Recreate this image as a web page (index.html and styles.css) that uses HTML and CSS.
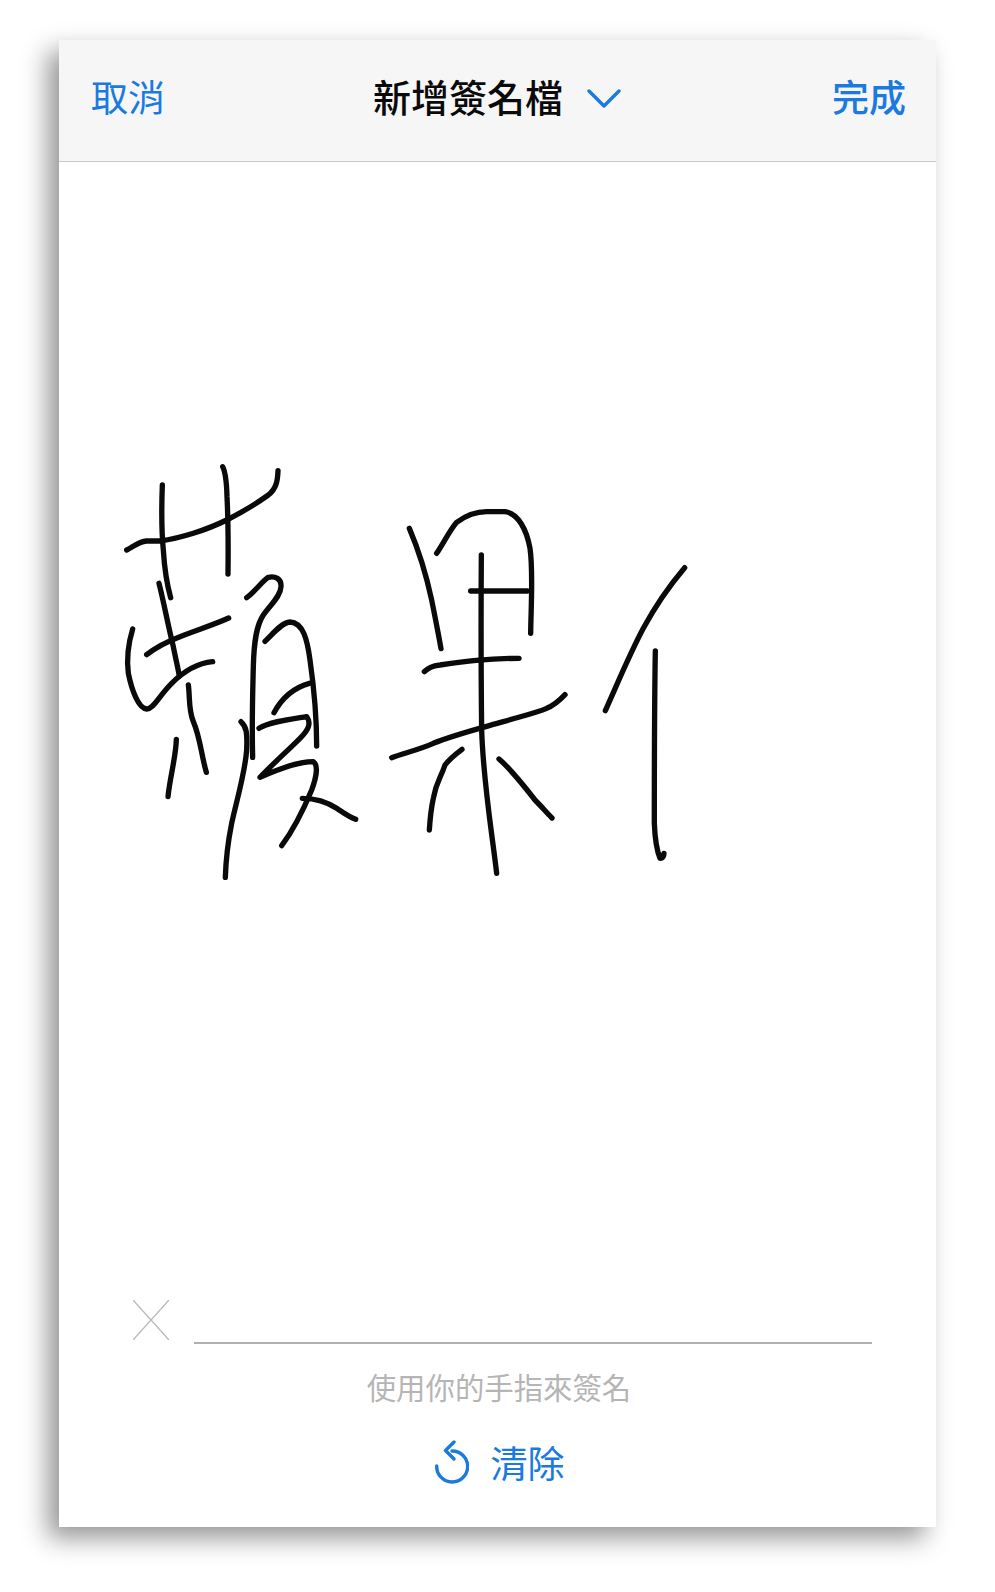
FILE: index.html
```html
<!DOCTYPE html>
<html lang="zh-Hant">
<head>
<meta charset="utf-8">
<title>新增簽名檔</title>
<link rel="stylesheet" href="styles.css">
</head>
<body>
<main class="sheet">
  <header class="bar">
    <span class="action action-left">取消</span>
    <div class="title">
      <span>新增簽名檔</span>
      <svg class="chevron" viewBox="0 0 34 20"><path d="M2 2 L17 17 L32 2"/></svg>
    </div>
    <span class="action action-right">完成</span>
  </header>
  <svg class="canvas" viewBox="0 0 877 1138" preserveAspectRatio="none">
    <g class="ink" transform="translate(41 278) scale(.33333)">
      <path d="M80 330 C100 320 115 305 140 303 L180 303 C240 295 320 270 380 240 C430 215 470 190 505 165 C530 145 533 120 534 92"/>
      <path d="M187 135 C185 190 183 260 190 330 C193 380 200 430 212 473"/>
      <path d="M368 80 C378 100 380 130 381 170 C385 250 385 320 384 402"/>
      <path d="M177 430 C190 480 205 560 220 620 C228 660 235 690 238 708"/>
      <path d="M140 644 C170 620 200 605 240 590 C290 570 340 555 386 534"/>
      <path d="M98 567 C85 610 80 660 85 700 C95 750 115 805 140 807 C160 808 175 770 215 730 C250 695 290 670 338 665"/>
      <path d="M265 735 C270 770 265 810 280 845 C300 890 305 950 319 997"/>
      <path d="M229 898 C228 950 210 1010 204 1070"/>
      <path d="M440 473 C465 455 485 425 505 412 C525 408 545 415 543 440 C542 470 510 495 490 525 C470 555 462 600 460 680 C458 760 455 850 458 952"/>
      <path d="M423 845 C440 860 442 880 440 930 C435 1000 410 1080 395 1150 C385 1200 378 1250 376 1312"/>
      <path d="M495 604 C520 580 545 548 570 546 C610 548 622 600 630 660 C640 730 650 820 650 918"/>
      <path d="M522 818 C545 775 575 745 628 730"/>
      <path d="M477 865 C510 845 570 838 620 830 C635 850 625 870 600 895 C560 935 520 970 480 1012 C530 990 590 965 640 965 C655 975 650 1010 635 1050 C610 1110 580 1170 545 1217"/>
      <path d="M607 1075 C650 1075 680 1085 710 1105 C730 1118 745 1130 767 1138"/>
    </g>
    <g class="ink" transform="translate(311 328) scale(.33333)">
      <path d="M118 115 C150 190 170 260 185 330 C195 380 205 430 213 476"/>
      <path d="M200 190 C220 160 240 120 260 97 C290 75 320 65 350 65 L405 65 C445 70 470 120 480 175 C490 240 483 350 482 430"/>
      <path d="M334 195 C333 350 333 550 335 720 C340 880 365 1020 380 1150"/>
      <path d="M302 303 L472 303"/>
      <path d="M163 545 C175 535 185 527 210 525 C280 515 350 505 447 505"/>
      <path d="M65 803 C100 790 150 778 190 760 C250 735 330 715 400 695 C450 680 500 668 530 655 C555 645 570 630 585 614"/>
      <path d="M276 778 C260 790 240 805 225 825 C210 870 200 870 190 925 C182 960 180 990 178 1020"/>
      <path d="M387 807 C420 835 460 885 495 930 C515 950 530 968 546 984"/>
      <path d="M944 233 C900 285 860 340 820 415 C780 490 745 575 706 662"/>
      <path d="M856 483 C853 650 853 850 853 1000 C855 1050 862 1085 870 1105 C880 1105 882 1095 882 1090"/>
    </g>
  </svg>
  <footer class="foot">
    <div class="sign-row">
      <svg class="cross" viewBox="0 0 36 40"><path d="M0 0 L36 40 M36 0 L0 40"/></svg>
      <div class="sign-line"></div>
    </div>
    <p class="hint">使用你的手指來簽名</p>
    <div class="clear">
      <svg class="undo" viewBox="0 0 34 44"><path d="M17 11 A15.5 15.5 0 1 1 1.7 26"/><path d="M19 2 L10.500 10.500 L19 19"/></svg>
      <span>清除</span>
    </div>
  </footer>
</main>
</body>
</html>
```
FILE: styles.css
```css
* { box-sizing: border-box; }
html, body { margin: 0; height: 100%; background: #fff; }
body {
  padding: 40px 59px 65px 59px;
  font-family: "Noto Sans CJK TC", "Noto Sans CJK SC", sans-serif;
  overflow: hidden;
}
.sheet {
  display: flex;
  flex-direction: column;
  height: 1487px;
  background: #fff;
  box-shadow: -11px 11px 24px rgba(0, 0, 0, .42);
}
.bar {
  flex: none;
  display: grid;
  grid-template-columns: 1fr auto 1fr;
  align-items: center;
  height: 122px;
  padding: 0 30px 10px 32px;
  background: #f6f6f7;
  border-bottom: 1.5px solid #c8c8c8;
}
.action { font-size: 37px; line-height: 44px; color: #1a7ae0; }
.action-right { justify-self: end; font-weight: 500; }
.title {
  display: flex;
  align-items: center;
  gap: 24px;
  margin-right: 3px;
  font-size: 38px;
  line-height: 44px;
  font-weight: 500;
  color: #0a0a0a;
}
.chevron { width: 34px; height: 20px; margin-top: 6px; fill: none; stroke: #1a7ae0; stroke-width: 3.4; stroke-linecap: round; stroke-linejoin: round; }
.canvas { flex: 1; display: block; width: 100%; min-height: 0; }
.ink path { fill: none; stroke: #0a0a0a; stroke-width: 16; stroke-linecap: round; stroke-linejoin: round; }
.foot { flex: none; height: 227px; }
.sign-row { display: flex; align-items: flex-end; gap: 25px; padding: 0 64px 0 74px; }
.cross { width: 36px; height: 40px; fill: none; stroke: #b8b8b8; stroke-width: 1.3; }
.sign-line { flex: 1; height: 2px; margin-bottom: -4px; background: #b0b0b0; }
.hint { margin: 26px 0 0; padding-left: 3px; text-align: center; font-size: 29.400px; line-height: 40px; color: #b5b5b5; }
.clear { display: flex; justify-content: center; align-items: center; gap: 22px; margin-top: 34px; padding-left: 4px; font-size: 37px; line-height: 44px; color: #1a7ae0; }
.undo { width: 34px; height: 44px; fill: none; stroke: #1a7ae0; stroke-width: 3.4; stroke-linecap: round; stroke-linejoin: round; }
```
